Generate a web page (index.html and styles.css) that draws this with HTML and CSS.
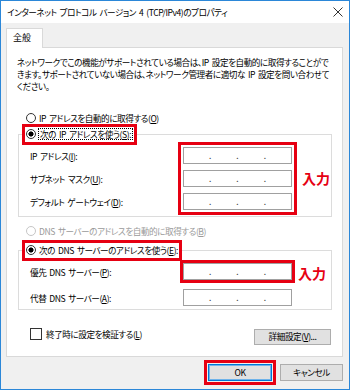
FILE: index.html
```html
<!DOCTYPE html>
<html lang="ja">
<head>
<meta charset="utf-8">
<title>インターネット プロトコル バージョン 4 (TCP/IPv4)のプロパティ</title>
<link rel="stylesheet" href="styles.css">
</head>
<body>
<div class="window">
  <div class="titlebar">
    <span class="title">インターネット プロトコル バージョン 4 (TCP/IPv4)のプロパティ</span>
    <svg class="close" width="10" height="10" viewBox="0 0 10 10"><path d="M0.5 0.5L9.5 9.5M9.5 0.5L0.5 9.5" stroke="#333" stroke-width="1" fill="none"/></svg>
  </div>
  <div class="body">
    <div class="tabs"><div class="tab">全般</div></div>
    <div class="panel">
      <p class="desc">ネットワークでこの機能がサポートされている場合は、IP 設定を自動的に取得することがで<br>きます。サポートされていない場合は、ネットワーク管理者に適切な IP 設定を問い合わせて<br>ください。</p>

      <div class="radio-row"><span class="radio"></span><span>IP アドレスを自動的に取得する(<u>O</u>)</span></div>

      <fieldset class="group g1">
        <legend class="legend mark"><span class="radio checked"></span><span class="focus">次の IP アドレスを使う(<u>S</u>):</span></legend>
        <div class="g1-body">
          <div class="labels">
            <div class="lbl">IP アドレス(<u>I</u>):</div>
            <div class="lbl">サブネット マスク(<u>U</u>):</div>
            <div class="lbl">デフォルト ゲートウェイ(<u>D</u>):</div>
          </div>
          <div class="inputs mark">
            <div class="ip"><span>.</span><span>.</span><span>.</span></div>
            <div class="ip"><span>.</span><span>.</span><span>.</span></div>
            <div class="ip"><span>.</span><span>.</span><span>.</span></div>
          </div>
          <div class="note">入力</div>
        </div>
      </fieldset>

      <div class="radio-row dns-auto disabled"><span class="radio"></span><span>DNS サーバーのアドレスを自動的に取得する(<u>B</u>)</span></div>

      <fieldset class="group g2">
        <legend class="legend mark"><span class="radio checked"></span><span>次の DNS サーバーのアドレスを使う(<u>E</u>):</span></legend>
        <div class="g2-body">
          <div class="row">
            <div class="lbl2">優先 DNS サーバー(<u>P</u>):</div>
            <div class="ip mark"><span>.</span><span>.</span><span>.</span></div>
            <div class="note note2">入力</div>
          </div>
          <div class="row">
            <div class="lbl2">代替 DNS サーバー(<u>A</u>):</div>
            <div class="ip"><span>.</span><span>.</span><span>.</span></div>
          </div>
        </div>
      </fieldset>

      <div class="check-row">
        <div class="check"><span class="box"></span><span>終了時に設定を検証する(<u>L</u>)</span></div>
        <div class="btn adv">詳細設定(<u>V</u>)...</div>
      </div>
    </div>
    <div class="actions">
      <div class="btn ok mark-ok">OK</div>
      <div class="btn cancel">キャンセル</div>
    </div>
  </div>
</div>
</body>
</html>
```

FILE: styles.css
```css
html, body {
  margin: 0;
  padding: 0;
  background: #ffffff;
}

body {
  font-family: "Noto Sans CJK JP", "Noto Sans", sans-serif;
  font-size: 8.6px;
  letter-spacing: -0.45px;
  word-spacing: 1.5px;
  font-feature-settings: "palt";
  color: #000;
}

.window {
  width: 350px;
  height: 390px;
  box-sizing: border-box;
  border: 1px solid #2b87d8;
  background: #f0f0f0;
  display: flex;
  flex-direction: column;
}

.titlebar {
  height: 22px;
  flex: none;
  background: #ffffff;
  display: flex;
  align-items: center;
  justify-content: space-between;
  padding: 0 6px;
}

.title {
  white-space: nowrap;
}

.close {
  display: block;
}

.body {
  padding: 5px 6px 0 5px;
}

.tabs {
  display: flex;
}

.tab {
  position: relative;
  z-index: 1;
  width: 37px;
  height: 20px;
  box-sizing: border-box;
  margin-bottom: -1px;
  padding-left: 6px;
  background: #ffffff;
  border: 1px solid #d9d9d9;
  border-bottom: none;
  line-height: 18px;
  font-size: 9px;
  letter-spacing: 0;
}

.panel {
  height: 310px;
  box-sizing: border-box;
  border: 1px solid #d9d9d9;
  background: #ffffff;
  display: flow-root;
}

.desc {
  margin: 8px 0 0 10px;
  line-height: 12.2px;
  white-space: nowrap;
}

.radio-row {
  display: flex;
  align-items: center;
  height: 12px;
  line-height: 12px;
  margin: 19px 0 0 19px;
  white-space: nowrap;
}

.radio {
  display: inline-block;
  flex: none;
  width: 10px;
  height: 10px;
  box-sizing: border-box;
  border: 1px solid #333;
  border-radius: 50%;
  margin-right: 3px;
  background: #fff;
}

.radio.checked {
  background: radial-gradient(circle, #000 0, #000 2.3px, #fff 2.8px);
}

.disabled {
  color: #9a9a9a;
}

.disabled .radio {
  border-color: #c6c6c6;
}

.dns-auto {
  margin-top: 8px;
}

.group {
  margin: 3px 10px 0 11px;
  padding: 0;
  border: 1px solid #dcdcdc;
  min-inline-size: 0;
  background: #ffffff;
}

.g2 {
  margin-top: 6px;
}

.legend {
  display: flex;
  align-items: center;
  height: 15px;
  margin-left: 6px;
  padding: 0 1px;
  white-space: nowrap;
}

.mark {
  outline: 3px solid #e60012;
}

.focus {
  border: 1px dotted #000;
  line-height: 10px;
  padding: 0 1px;
  margin-left: -1px;
}

.g1-body {
  display: flex;
  margin-top: 3px;
  padding-bottom: 4px;
}

.labels {
  width: 162px;
  box-sizing: border-box;
  padding: 2px 0 0 11px;
  display: flex;
  flex-direction: column;
  gap: 6px;
}

.lbl {
  height: 17px;
  line-height: 18px;
  white-space: nowrap;
}

.inputs {
  padding: 2px;
  display: flex;
  flex-direction: column;
  gap: 6px;
}

.ip {
  width: 109px;
  height: 17px;
  box-sizing: border-box;
  border: 1px solid #a0a0a0;
  background: #fff;
  display: flex;
  justify-content: space-evenly;
  align-items: center;
  color: #444;
  font-size: 10px;
  letter-spacing: 0;
  line-height: 17px;
  flex: none;
}

.ip span {
  display: block;
  transform: translateY(-1px);
}

.note {
  align-self: center;
  margin-left: 8px;
  color: #e60012;
  font-size: 14px;
  font-weight: bold;
  letter-spacing: 0;
  line-height: 16px;
  white-space: nowrap;
}

.note2 {
  margin-left: 6px;
  margin-top: 2px;
}

.g2-body {
  margin-top: 5px;
  padding-bottom: 3px;
  display: flex;
  flex-direction: column;
  gap: 8px;
}

.row {
  display: flex;
  align-items: center;
}

.lbl2 {
  width: 164px;
  box-sizing: border-box;
  padding: 1px 0 0 11px;
  white-space: nowrap;
}

.check-row {
  display: flex;
  justify-content: space-between;
  align-items: flex-start;
  margin: 18px 11px 0 23px;
}

.check {
  display: flex;
  align-items: center;
  line-height: 12px;
  white-space: nowrap;
}

.box {
  display: inline-block;
  width: 12px;
  height: 12px;
  box-sizing: border-box;
  border: 1px solid #333;
  background: #fff;
  margin-right: 4px;
}

.btn {
  box-sizing: border-box;
  height: 17px;
  background: #e1e1e1;
  border: 1px solid #adadad;
  display: flex;
  align-items: center;
  justify-content: center;
  line-height: 15px;
  white-space: nowrap;
}

.adv {
  width: 77px;
  height: 16px;
  margin-top: 1px;
}

.actions {
  display: flex;
  justify-content: flex-end;
  gap: 8px;
  margin-top: 7px;
}

.ok {
  width: 64px;
  border-color: #0078d7;
  box-shadow: inset 0 0 0 1px #6fb3ea;
}

.mark-ok {
  outline: 3px solid #e60012;
  outline-offset: 1px;
}

.cancel {
  width: 63px;
}
```
